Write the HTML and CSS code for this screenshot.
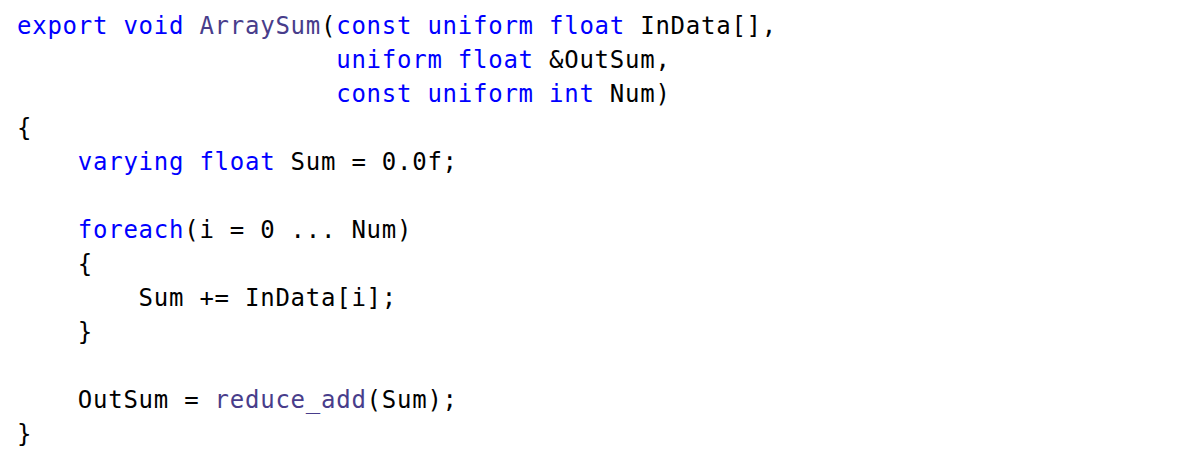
FILE: index.html
```html
<!DOCTYPE html>
<html>
<head>
<meta charset="utf-8">
<link rel="stylesheet" href="styles.css">
</head>
<body>
<pre class="code"><span class="kw">export</span> <span class="kw">void</span> <span class="fn">ArraySum</span>(<span class="kw">const</span> <span class="kw">uniform</span> <span class="kw">float</span> InData[],
                     <span class="kw">uniform</span> <span class="kw">float</span> &amp;OutSum,
                     <span class="kw">const</span> <span class="kw">uniform</span> <span class="kw">int</span> Num)
{
    <span class="kw">varying</span> <span class="kw">float</span> Sum = 0.0f;

    <span class="kw">foreach</span>(i = 0 ... Num)
    {
        Sum += InData[i];
    }

    OutSum = <span class="fn">reduce_add</span>(Sum);
}</pre>
</body>
</html>
```
FILE: styles.css
```css
html, body {
  margin: 0;
  padding: 0;
  background: #ffffff;
}

.code {
  margin: 0;
  padding: 9px 0 0 17px;
  font-family: "DejaVu Sans Mono", "Liberation Mono", monospace;
  font-size: 24px;
  letter-spacing: 0.75px;
  line-height: 34px;
  color: #000000;
}

.kw {
  color: #0000ff;
}

.fn {
  color: #483d8b;
}
```
